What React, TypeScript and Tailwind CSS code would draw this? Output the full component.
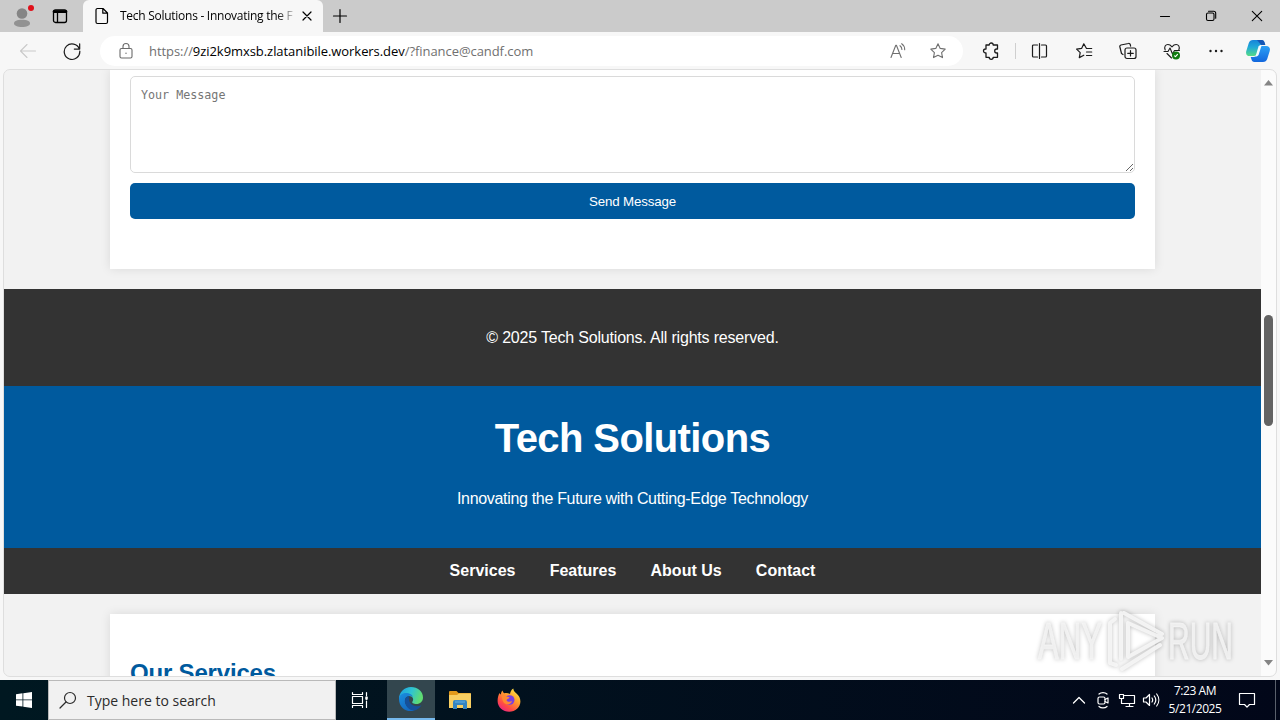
import type { ReactNode } from "react";

// wrapper for small stroked icons
function Icon({
  size = 18,
  stroke = 1.1,
  className = "",
  children,
}: {
  size?: number;
  stroke?: number;
  className?: string;
  children: ReactNode;
}) {
  return (
    <svg
      width={size}
      height={size}
      viewBox="0 0 18 18"
      fill="none"
      stroke="currentColor"
      strokeWidth={stroke}
      strokeLinecap="round"
      strokeLinejoin="round"
      className={`shrink-0 ${className}`}
    >
      {children}
    </svg>
  );
}

// top strip with profile, tab and window buttons
function TabStrip() {
  return (
    <div className="flex h-8 bg-[#cbcbcb] text-black">
      <div className="flex w-11 items-center justify-center">
        <svg width="26" height="28" viewBox="0 0 26 28">
          <circle cx="13" cy="11.5" r="5.3" fill="#858585" />
          <path d="M5 21.5c0-2.700 3-3.800 8-3.800s8 1.100 8 3.800c0 2-3.500 3.500-8 3.500s-8-1.500-8-3.500z" fill="#929292" />
          <circle cx="22" cy="6" r="3" fill="#e0101a" />
        </svg>
      </div>
      <div className="flex w-8 items-center justify-center">
        <Icon size={18} stroke={1.3}>
          <rect x="2.5" y="3" width="13" height="12.5" rx="2" />
          <path d="M3 4.600h12" strokeWidth="2.600" />
          <path d="M6.500 5v10" />
        </Icon>
      </div>

      {/* active tab */}
      <div className="ml-[7px] flex w-[240px] items-center rounded-t-md bg-[#f7f7f7]">
        <Icon size={18} stroke={1.2} className="ml-[10px]">
          <path d="M4.500 1.500h5.500l4.500 4.500v9a1.500 1.500 0 0 1-1.500 1.500h-8.500a1.500 1.500 0 0 1-1.500-1.500v-12a1.500 1.500 0 0 1 1.500-1.500zM9.800 1.800v4.400h4.400" />
        </Icon>
        <div className="ml-[9px] w-[174px] whitespace-nowrap bg-gradient-to-r from-black from-90% to-black/15 to-100% bg-clip-text font-['Open_Sans','Noto_Sans',sans-serif] text-[12px] tracking-[-0.27px] text-transparent">
          Tech Solutions - Innovating the F
        </div>
        <Icon size={18} stroke={1.2} className="ml-[4px]">
          <path d="M5 5l8 8M13 5l-8 8" />
        </Icon>
      </div>
      <div className="flex w-[34px] items-center justify-center">
        <Icon size={18} stroke={1.2}>
          <path d="M9 2.500v13M2.500 9h13" />
        </Icon>
      </div>

      {/* window buttons */}
      <div className="ml-auto flex">
        <div className="flex w-[46px] items-center justify-center">
          <Icon>
            <path d="M4.500 9.500h9" />
          </Icon>
        </div>
        <div className="flex w-[46px] items-center justify-center">
          <Icon>
            <rect x="4.500" y="6" width="7.500" height="7.500" rx="1.500" />
            <path d="M6.500 4.300h5.200a2 2 0 0 1 2 2v5" />
          </Icon>
        </div>
        <div className="flex w-[46px] items-center justify-center">
          <Icon>
            <path d="M4.300 4.300l9.400 9.400M13.700 4.300l-9.400 9.400" />
          </Icon>
        </div>
      </div>
    </div>
  );
}

const starPath = "M9 1.800l2.200 4.600 5 .7-3.600 3.500.9 5-4.500-2.400-4.500 2.400.9-5-3.600-3.500 5-.7z";

function AddressBar() {
  return (
    <div className="flex h-[38px] items-center bg-[#f7f7f7] text-[#1b1b1b]">
      <div className="flex w-14 justify-center text-[#c9c9c9]">
        <Icon>
          <path d="M1.500 9h15M8 2.500l-6.500 6.500 6.500 6.500" />
        </Icon>
      </div>
      <div className="flex w-8 justify-center">
        <Icon size={20} stroke={1.1}>
          <path d="M15.600 7.200a7 7 0 1 0 .4 1.800M15.900 2.500v4.800h-4.800" />
        </Icon>
      </div>

      <div className="ml-3 flex h-[30px] w-[863px] items-center rounded-full bg-white font-['Open_Sans','Noto_Sans',sans-serif] text-[13px] text-[#707070]">
        <Icon size={18} className="ml-[17px] text-[#6b6b6b]">
          <rect x="3" y="6.500" width="12" height="9.500" rx="1.500" />
          <path d="M6 6.500v-2a3 3 0 0 1 6 0v2" />
          <circle cx="9" cy="11.300" r=".7" fill="currentColor" stroke="none" />
        </Icon>
        <span className="ml-[14px] pt-px tracking-[-0.06px] whitespace-pre">
          https://<span className="text-black">9zi2k9mxsb.zlatanibile.workers.dev</span>/?finance@candf.com
        </span>
        <div className="ml-auto flex w-10 justify-center">
          <Icon>
            <path d="M2 15.500l4.800-12.300h.6l4.800 12.300M3.700 11.500h6.800M11 3.700c1.300.9 1.900 2.200 1.900 3.800M12.700 1.700c2 1.300 3 3.300 3 6" />
          </Icon>
        </div>
        <div className="mr-[5px] flex w-10 justify-center">
          <Icon>
            <path d={starPath} />
          </Icon>
        </div>
      </div>

      <div className="ml-[6px] flex w-11 justify-center">
        <Icon stroke={1.3}>
          <path d="M4 3h3.200a2 2 0 0 1 4 0h4.300v4h-.8a2 2 0 0 0 0 4h.8v4.300h-4.300a2 2 0 0 1-4 0h-3.200v-4.300h-.5a2 2 0 0 1 0-4h.5z" />
        </Icon>
      </div>
      <div className="mx-[2px] h-4 w-px bg-[#cfcfcf]" />
      <div className="flex w-11 justify-center">
        <Icon stroke={1.2}>
          <path d="M6.500 3h-4a1 1 0 0 0-1 1v10a1 1 0 0 0 1 1h4M10.500 3h4a1 1 0 0 1 1 1v10a1 1 0 0 1-1 1h-4M8.500 1.500v15" />
        </Icon>
      </div>
      <div className="flex w-11 justify-center">
        <Icon stroke={1.2}>
          <path d="M16.700 6.500h-5.200l-2.700-4.700-2.200 4.600-5 .7 3.600 3.500-.9 5 4.500-2.400M11.500 10h5.200M11.500 13.500h5.200" />
        </Icon>
      </div>
      <div className="flex w-11 justify-center">
        <Icon stroke={1.2}>
          <rect x="6" y="6" width="11" height="10.500" rx="2" />
          <path d="M11.500 8.500v5.500M8.700 11.300h5.600M4 12.500l-1.500-1-1.600-6.500a1.500 1.500 0 0 1 1-2l7.600-1.500a1.500 1.500 0 0 1 1.800 1.200l.3 1.500" />
        </Icon>
      </div>
      <div className="flex w-11 justify-center">
        <Icon>
          <path d="M2.200 8c-1.400-3.200.4-5.500 2.700-5.500 2 0 3.100 1.100 4.100 2.300 1-1.200 2.100-2.300 4.100-2.300 2.300 0 4.100 2.300 2.700 5.500M1 9.500h4l2-3.500 2.500 6 2-3.500h5M4 11.500l4.500 4.500" />
          <circle cx="13" cy="13.500" r="4" fill="#107c10" stroke="none" />
          <path d="M11.500 13.800l1 .9 2-2.300" stroke="#fff" />
        </Icon>
      </div>
      <div className="flex w-11 justify-center">
        <Icon>
          <g fill="currentColor" stroke="none">
            <circle cx="3.500" cy="9" r="1.200" />
            <circle cx="9" cy="9" r="1.200" />
            <circle cx="14.500" cy="9" r="1.200" />
          </g>
        </Icon>
      </div>
      <div className="flex w-10 justify-center">
        <CopilotLogo />
      </div>
    </div>
  );
}

function CopilotLogo() {
  return (
    <svg width="24" height="24" viewBox="0 0 24 24">
      <defs>
        <linearGradient id="copilotLeft" x1="0" y1="0" x2="0" y2="1">
          <stop offset="0" stopColor="#1684d9" />
          <stop offset=".45" stopColor="#20a9d8" />
          <stop offset="1" stopColor="#56dc86" />
        </linearGradient>
        <linearGradient id="copilotRight" x1="0" y1="0" x2="0" y2="1">
          <stop offset="0" stopColor="#2aa0f5" />
          <stop offset="1" stopColor="#1267dd" />
        </linearGradient>
      </defs>
      <path d="M7 1h8.500c2 0 2.500 1 3 2.500l.8 2.500h-3c-2 0-2.800 1-3.300 2.700l-1.700 5.300c-.6 2-1.500 3-3.500 3h-4c-3 0-4.300-2-3.500-5l2.500-8c.7-2 2-3 4.200-3z" fill="url(#copilotLeft)" />
      <path d="M17 23h-8.500c-2 0-2.500-1-3-2.500l-.8-2.500h3c2 0 2.800-1 3.300-2.700l1.700-5.300c.6-2 1.500-3 3.500-3h4c3 0 4.300 2 3.500 5l-2.500 8c-.7 2-2 3-4.200 3z" fill="url(#copilotRight)" />
      <path d="M12.500 7.500c.6-1 1.700-1.500 3.200-1.500l-3 9.500c-.6 1.500-1.600 2-3.200 2z" fill="#f4fbff" />
      <path d="M11 1h4.500c2 0 2.500 1 3 2.500l.8 2.500h-4z" fill="#1556b5" />
    </svg>
  );
}

// the site that is open in the tab
function WebPage() {
  return (
    <div className="h-[606px] w-[1257px] overflow-hidden bg-[#f2f2f2] font-['Liberation_Sans',Arial,sans-serif] text-base">
      <section className="mx-auto h-[199px] w-[1045px] bg-white px-5 pt-[6px] shadow-[0_0_10px_rgba(0,0,0,0.1)]">
        <textarea
          placeholder="Your Message"
          className="block h-[97px] w-full rounded-[5px] border border-[#dadada] p-[10px] font-['DejaVu_Sans_Mono',monospace] text-[11.7px] leading-4 placeholder:text-[#757575]"
        />
        <button className="mt-[10px] block h-9 w-full rounded-[5px] bg-[#005a9e] pt-px text-[13.33px] tracking-[-0.15px] text-white">
          Send Message
        </button>
      </section>

      <footer className="mt-5 flex h-[97px] items-center justify-center bg-[#333] text-white">
        <p className="tracking-[-0.19px]">© 2025 Tech Solutions. All rights reserved.</p>
      </footer>

      <header className="flex h-[162px] flex-col items-center bg-[#005a9e] pt-[29px] text-white">
        <h1 className="text-[40px] leading-[46px] font-bold tracking-[-0.6px]">Tech Solutions</h1>
        <p className="mt-[26px] tracking-[-0.32px]">Innovating the Future with Cutting-Edge Technology</p>
      </header>

      <nav className="flex h-[46px] items-center justify-center gap-[34.2px] bg-[#333] font-bold text-white">
        <a>Services</a>
        <a>Features</a>
        <a>About Us</a>
        <a>Contact</a>
      </nav>

      <section className="mx-auto mt-5 h-[200px] w-[1045px] bg-white px-5 pt-[45px] shadow-[0_0_10px_rgba(0,0,0,0.1)]">
        <h2 className="text-2xl leading-7 font-bold tracking-[-0.18px] text-[#005a9e]">Our Services</h2>
      </section>
    </div>
  );
}

function Scrollbar() {
  return (
    <div className="flex w-[15px] flex-col items-center bg-[#fbfbfb]">
      <svg width="9" height="6" viewBox="0 0 9 6" className="mt-[10px]">
        <path d="M4.500 0l4.500 5.500h-9z" fill="#858585" />
      </svg>
      <div className="mt-[229px] h-[111px] w-[9px] rounded-full bg-[#636363]" />
      <svg width="9" height="6" viewBox="0 0 9 6" className="mt-auto mb-[10px]">
        <path d="M4.500 5.500l4.500-5.500h-9z" fill="#858585" />
      </svg>
    </div>
  );
}

// translucent logo lying over the page corner
function Watermark() {
  return (
    <svg
      width="214"
      height="72"
      viewBox="0 0 214 72"
      className="absolute top-[605px] left-[1032px] drop-shadow-[0_0_2px_rgba(0,0,0,0.28)]"
    >
      <g
        fill="#f4f4f4"
        fillOpacity="0.85"
        stroke="#f4f4f4"
        strokeOpacity="0.85"
        strokeWidth="0.8"
        fontFamily="'Liberation Sans', Arial, sans-serif"
        fontSize="51"
      >
        <text x="6" y="54" textLength="64" lengthAdjust="spacingAndGlyphs">ANY</text>
        <text x="136" y="54" textLength="65" lengthAdjust="spacingAndGlyphs">RUN</text>
      </g>
      <g fill="none" stroke="#f6f6f6" strokeOpacity="0.9" strokeWidth="4" strokeLinejoin="round" strokeLinecap="round">
        <path d="M83 14l-5 4v40l6 2" />
        <path d="M92 8l38 21M89 8v46M96 18v34l34-19zM90 64l38-24" />
      </g>
    </svg>
  );
}

function EdgeLogo() {
  return (
    <svg width="26" height="26" viewBox="0 0 26 26">
      <defs>
        <linearGradient id="edgeTop" x1="0" y1="0" x2="1" y2=".3">
          <stop offset="0" stopColor="#1b9de2" />
          <stop offset=".55" stopColor="#2fc4d2" />
          <stop offset="1" stopColor="#5fdc72" />
        </linearGradient>
        <linearGradient id="edgeLow" x1="0" y1="0" x2=".6" y2="1">
          <stop offset="0" stopColor="#1a8fe0" />
          <stop offset="1" stopColor="#1468be" />
        </linearGradient>
      </defs>
      <path d="M1 13c0-7 5.300-12 12-12s12 4.500 12 10.500c0 4-3 6.500-6.500 6.500-3 0-5-1-4-2.500 1.500-2 .5-5.500-3.500-5.500-4.500 0-8 3-10 3z" fill="url(#edgeTop)" />
      <path d="M1 13c0-3.500 3-6 7-6 3.500 0 6.500 1.700 7 4-1-1-2.500-1.500-4-1.200-3 .6-4.500 3.200-4 6.200.7 4.500 5 7.500 9.500 8.500-8 2.500-15.500-3-15.500-11.500z" fill="url(#edgeLow)" />
      <path d="M11 10c-3 .5-4.500 3.200-4 6 .7 5 5 9 9.500 8.500 3-.8 5.300-2.700 7-5.300-6 2.800-14-.2-12.500-9.200z" fill="#15509a" />
    </svg>
  );
}

function ExplorerLogo() {
  return (
    <svg width="22" height="20" viewBox="0 0 22 20">
      <path d="M0 2a1 1 0 0 1 1-1h6.500l2 2h11.500a1 1 0 0 1 1 1v14h-22z" fill="#e39a1b" />
      <path d="M0 5h8l2-1.500h12v14.500h-22z" fill="#f9cf62" />
      <path d="M4 19v-7a2 2 0 0 1 2-2h10a2 2 0 0 1 2 2v7h-4v-4h-6v4z" fill="#3584c0" />
      <path d="M6 10.500h10v2.500h-10z" fill="#4c9ad2" />
    </svg>
  );
}

function FirefoxLogo() {
  return (
    <svg width="24" height="24" viewBox="0 0 24 24">
      <defs>
        <linearGradient id="foxBody" x1=".9" y1="0" x2=".2" y2="1">
          <stop offset="0" stopColor="#fff04a" />
          <stop offset=".4" stopColor="#ffa02d" />
          <stop offset=".75" stopColor="#ff4a45" />
          <stop offset="1" stopColor="#e8208a" />
        </linearGradient>
      </defs>
      <path d="M2.500 5c.3.8.8 1.200 1.300 1.600.2-1.600.8-3.100 1.700-4.100.2 1.200.8 2 1.800 2.700 2-.5 4-.2 5.700.8.3-2.200 1.200-4.200 3.300-5.500.2 2.500 1.700 3.500 3.200 5 2.500 2.300 3.900 4.700 3.900 8 0 5.800-5 10.200-11.200 10.200s-11.600-4.400-11.600-10.700c0-3 .7-5.700 1.900-8z" fill="url(#foxBody)" />
      <circle cx="12.700" cy="12" r="4.800" fill="#7a3fe0" />
      <path d="M4.500 7c2.500-.8 4 .3 5 1.500l3 .8c-.2 1.700-2.500 1.500-3 2.900 1.200 2.300 4 1.800 5.500.8-.5 3.500-6 4.500-8.300 1.500-1.200-1.600-1.800-4.800-2.200-7.500z" fill="#ff8a30" />
    </svg>
  );
}

function Taskbar() {
  return (
    <div className="flex h-10 bg-gradient-to-r from-[#001821] to-[#020719] font-['Open_Sans','Noto_Sans',sans-serif] text-white">
      <div className="flex w-12 items-center justify-center">
        <svg width="16" height="16" viewBox="0 0 16 16" fill="#fff">
          <path d="M0 2.200l6.500-.9v6.200h-6.500zM7.300 1.200l8.700-1.200v7.500h-8.700zM0 8.300h6.500v6.300l-6.500-.9zM7.300 8.300h8.700v7.700l-8.700-1.200z" />
        </svg>
      </div>
      <div className="flex w-72 items-center border border-[#b9b9b9] bg-[#f1f1f1] text-[14px] text-[#2b2b2b]">
        <Icon size={18} stroke={1.2} className="ml-[10px]">
          <circle cx="11" cy="7" r="5.500" />
          <path d="M7 11l-6 6" />
        </Icon>
        <span className="ml-[10px] whitespace-nowrap">Type here to search</span>
      </div>
      <div className="flex w-[51px] items-center justify-center">
        <Icon stroke={1.2} className="mr-[3px]">
          <path d="M1.500 1.500v2h10v-2M1.500 5.500h10v7h-10zM1.500 16.500v-2h10v2M15.500 1.500v3M15.500 10v6.500" />
          <path d="M15.500 6.500v1.200" strokeWidth="2.500" />
        </Icon>
      </div>
      <div className="flex w-12 items-center justify-center border-b-2 border-[#76b9ed] bg-[#33464e]">
        <EdgeLogo />
      </div>
      <div className="flex w-[49px] items-center justify-center">
        <ExplorerLogo />
      </div>
      <div className="flex w-[49px] items-center justify-center">
        <FirefoxLogo />
      </div>

      {/* tray */}
      <div className="ml-auto flex items-center">
        <div className="flex w-6 justify-center">
          <Icon stroke={1.3}>
            <path d="M3.500 12l5.500-5.500 5.500 5.500" />
          </Icon>
        </div>
        <div className="flex w-6 justify-center">
          <Icon stroke={1.2}>
            <rect x="4" y="6" width="7" height="7" rx="1.500" />
            <path d="M11 8.500l3-1.500v5l-3-1.500M5 3c2-1.800 6-1.800 8 0M5 15.500c2 1.800 6 1.800 8 0" />
          </Icon>
        </div>
        <div className="flex w-6 justify-center">
          <Icon stroke={1.2}>
            <path d="M6.500 4.500h10v8h-10M11.500 12.500v3M8 15.500h7M1.500 3.500h4v4h-4zM3.500 7.500v5h3" />
          </Icon>
        </div>
        <div className="flex w-6 justify-center">
          <Icon stroke={1.2}>
            <path d="M1.500 7h2.500l3.500-3.500v11l-3.500-3.500h-2.500zM10 7c.8 1.200.8 2.800 0 4M12.300 5c1.800 2.400 1.800 5.600 0 8M14.700 3c2.800 3.600 2.800 8.400 0 12" />
          </Icon>
        </div>
        <div className="w-16 text-center text-[12px] leading-[18px] tracking-[-0.45px] whitespace-nowrap">
          <div>7:23 AM</div>
          <div>5/21/2025</div>
        </div>
        <div className="flex w-10 justify-center">
          <Icon stroke={1.2}>
            <path d="M1.500 2.500h15v11h-5l-2.500 2.700-2.500-2.700h-5z" />
          </Icon>
        </div>
        <div className="ml-2 h-10 w-[5px] border-l border-[#5a606c]" />
      </div>
    </div>
  );
}

export default function App() {
  return (
    <div className="relative flex h-[720px] w-[1280px] flex-col overflow-hidden bg-[#f7f7f7]">
      <TabStrip />
      <AddressBar />
      <main className="mb-1 ml-1 flex h-[606px] w-[1272px] overflow-hidden rounded-md outline outline-1 outline-[#dedede]">
        <WebPage />
        <Scrollbar />
      </main>
      <Taskbar />
      <Watermark />
    </div>
  );
}
